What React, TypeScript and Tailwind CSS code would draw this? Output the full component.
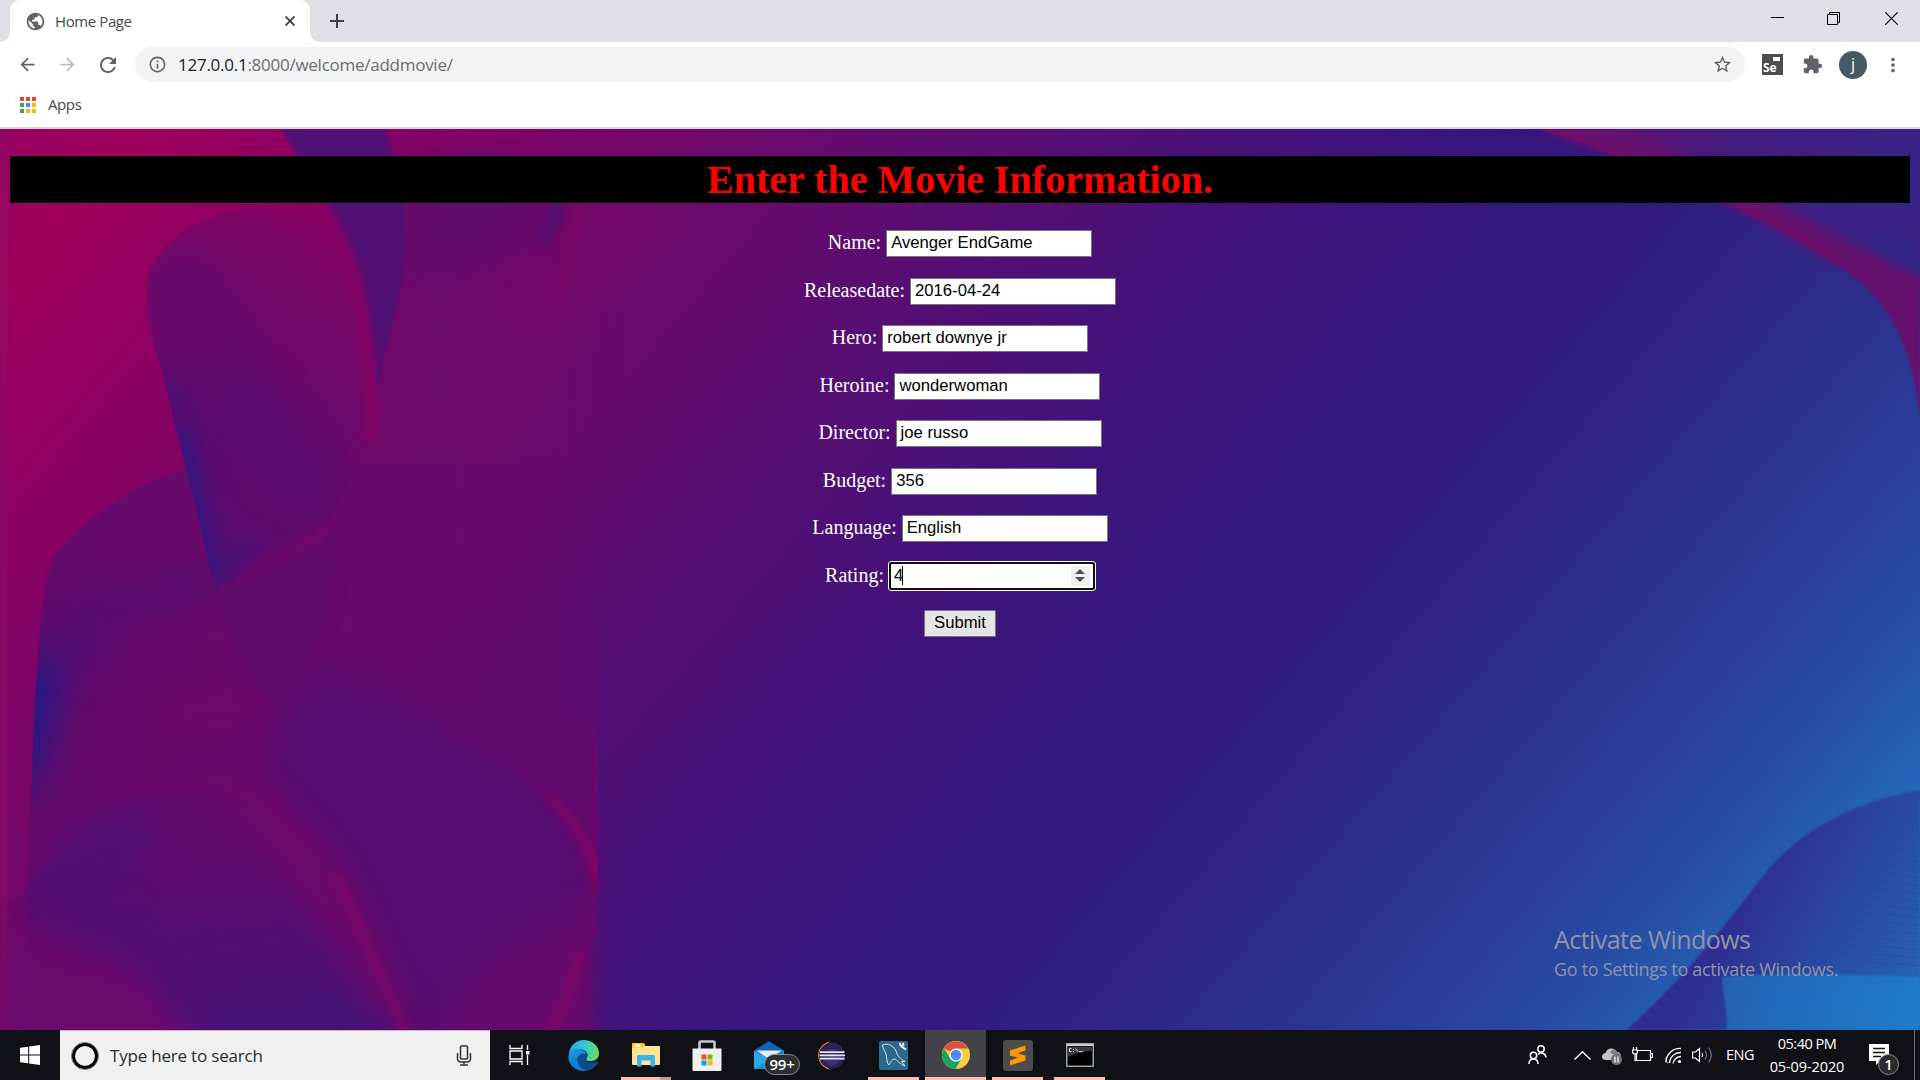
import type { ReactNode } from "react";
import {
  MdArrowBack,
  MdArrowForward,
  MdRefresh,
  MdStarBorder,
  MdExtension,
  MdMoreVert,
  MdPublic,
  MdInfoOutline,
  MdAdd,
} from "react-icons/md";

const appDots = [
  "bg-[#ea4335]", "bg-[#ea4335]", "bg-[#ea4335]",
  "bg-[#34a853]", "bg-[#4285f4]", "bg-[#fbbc04]",
  "bg-[#34a853]", "bg-[#fbbc04]", "bg-[#fbbc04]",
];

function TabStrip() {
  return (
    <div className="flex h-[42px] shrink-0 bg-[#dee1e6]">
      <div className="flex w-[10px] items-end overflow-hidden bg-white">
        <div className="h-full w-full rounded-br-[10px] bg-[#dee1e6]" />
      </div>
      <div className="flex w-[300px] items-center rounded-t-[10px] bg-white pl-[15px] pr-[15px]">
        <MdPublic className="size-[21px] text-[#5f6368]" />
        <span className="ml-[9px] text-[15px] tracking-[-0.4px] text-[#45494d]">Home Page</span>
        <svg className="ml-auto" width="10" height="10" viewBox="0 0 10 10">
          <path d="M.5 .5L9.500 9.500M9.500 .5L.5 9.500" stroke="#3c4043" strokeWidth="1.900" />
        </svg>
      </div>
      <div className="w-[10px] bg-white">
        <div className="h-full w-full rounded-bl-[10px] bg-[#dee1e6]" />
      </div>
      <MdAdd className="ml-[5px] mt-[9px] size-[24px] text-[#3c4043]" />
      <div className="ml-auto flex pt-[12px] text-black">
        <svg width="13" height="13" className="mr-[43px]" viewBox="0 0 13 13">
          <path d="M0 5.5H13" stroke="currentColor" />
        </svg>
        <svg width="13" height="13" className="mr-[45px]" viewBox="0 0 13 13" fill="none" stroke="currentColor">
          <path d="M.5 2.5H10.5V12.5H.5ZM2.5 2.5V.5H12.5V10.5H10.5" />
        </svg>
        <svg width="13" height="13" className="mr-[22px]" viewBox="0 0 13 13" fill="none" stroke="currentColor">
          <path d="M.3 .3L12.7 12.7M12.7 .3L.3 12.7" strokeWidth="1.1" />
        </svg>
      </div>
    </div>
  );
}

function Toolbar() {
  return (
    <div className="flex h-[45px] shrink-0 items-center bg-white pl-[17px] text-[#5f6368]">
      <MdArrowBack className="size-[21px]" />
      <MdArrowForward className="ml-[19px] size-[21px] text-[#babcbe]" />
      <MdRefresh className="ml-[18px] size-[24px]" />
      <div className="ml-[15px] flex h-[35px] w-[1610px] items-center rounded-full bg-[#f1f3f4] pl-[13px] pr-[12px]">
        <MdInfoOutline className="size-[19px]" />
        <span className="ml-[11px] text-[17px] tracking-[-0.26px] text-[#6a6e72]">
          <span className="text-[#202124]">127.0.0.1</span>:8000/welcome/addmovie/
        </span>
        <MdStarBorder className="ml-auto size-[21px]" />
      </div>
      <div className="ml-[17px] flex size-[21px] flex-col items-start bg-[#4d4d4d] pl-[1px] pt-[3px]">
        <span className="mr-[3px] h-[4px] w-[7px] shrink-0 self-end bg-white" />
        <span className="text-[12px] font-bold leading-[13px] tracking-[-0.2px] text-white">Se</span>
      </div>
      <MdExtension className="ml-[19px] size-[21px]" />
      <span className="ml-[16px] flex size-[28px] items-center justify-center rounded-full bg-[#455a64] pb-[2px] text-[16px] text-white">
        j
      </span>
      <MdMoreVert className="ml-[15px] size-[22px]" />
    </div>
  );
}

function BookmarksBar() {
  return (
    <div className="flex h-[42px] shrink-0 items-center border-b-2 border-[#d6d8dc] bg-white pb-[5px] pl-[20px]">
      <div className="grid grid-cols-3 gap-[2px]">
        {appDots.map((c, i) => (
          <span key={i} className={`size-[4px] ${c}`} />
        ))}
      </div>
      <span className="ml-[12px] text-[15px] tracking-[-0.4px] text-[#45494d]">Apps</span>
    </div>
  );
}

function Wallpaper() {
  return (
    <svg className="absolute inset-0" width="1920" height="901" viewBox="0 0 1920 901" aria-hidden="true">
      <defs>
        <linearGradient id="base" gradientUnits="userSpaceOnUse" x1="0" y1="0" x2="1520" y2="1300">
          <stop offset="0" stopColor="#960060" />
          <stop offset=".05" stopColor="#a0005c" />
          <stop offset=".12" stopColor="#900061" />
          <stop offset=".2" stopColor="#7c0567" />
          <stop offset=".28" stopColor="#6e096b" />
          <stop offset=".37" stopColor="#5c0d70" />
          <stop offset=".48" stopColor="#461179" />
          <stop offset=".57" stopColor="#36167e" />
          <stop offset=".66" stopColor="#311b81" />
          <stop offset=".77" stopColor="#2c308d" />
          <stop offset=".87" stopColor="#2848a2" />
          <stop offset=".93" stopColor="#2462b4" />
          <stop offset="1" stopColor="#1f7cc8" />
        </linearGradient>
        <linearGradient id="fold" gradientUnits="userSpaceOnUse" x1="30" y1="0" x2="560" y2="0">
          <stop offset="0" stopColor="#620b6d" />
          <stop offset=".35" stopColor="#6a0a6b" />
          <stop offset=".6" stopColor="#680a6c" />
          <stop offset="1" stopColor="#640b6c" stopOpacity="0" />
        </linearGradient>
        <linearGradient id="lower" gradientUnits="userSpaceOnUse" x1="0" y1="430" x2="0" y2="700">
          <stop offset="0" stopColor="#640b6c" stopOpacity="0" />
          <stop offset="1" stopColor="#640b6c" />
        </linearGradient>
        <linearGradient id="leaf" gradientUnits="userSpaceOnUse" x1="260" y1="80" x2="230" y2="460">
          <stop offset="0" stopColor="#7a0667" />
          <stop offset=".45" stopColor="#6d0a6b" />
          <stop offset=".65" stopColor="#600c6e" />
          <stop offset="1" stopColor="#560e72" />
        </linearGradient>
        <linearGradient id="petal" x1=".3" y1="0" x2=".6" y2="1">
          <stop offset="0" stopColor="#640b6d" />
          <stop offset=".5" stopColor="#5a0d70" />
          <stop offset="1" stopColor="#451278" />
        </linearGradient>
        <linearGradient id="cornerDark" gradientUnits="userSpaceOnUse" x1="1740" y1="770" x2="1900" y2="860">
          <stop offset="0" stopColor="#2f2d8f" />
          <stop offset=".35" stopColor="#2b3f9b" />
          <stop offset="1" stopColor="#2560b2" />
        </linearGradient>
        <linearGradient id="cornerBright" gradientUnits="userSpaceOnUse" x1="1720" y1="850" x2="1920" y2="900">
          <stop offset="0" stopColor="#2562b3" />
          <stop offset="1" stopColor="#1d7dc9" />
        </linearGradient>
        <linearGradient id="topCorner" gradientUnits="userSpaceOnUse" x1="1560" y1="0" x2="1900" y2="100">
          <stop offset="0" stopColor="#650e6d" />
          <stop offset=".5" stopColor="#431b7e" />
          <stop offset="1" stopColor="#352489" />
        </linearGradient>
        <filter id="b1" x="-20%" y="-20%" width="140%" height="140%" colorInterpolationFilters="sRGB"><feGaussianBlur stdDeviation="1.2" /></filter>
        <filter id="b4" filterUnits="userSpaceOnUse" x="-100" y="-100" width="2120" height="1101" colorInterpolationFilters="sRGB"><feGaussianBlur stdDeviation="5" /></filter>
        <filter id="b15" filterUnits="userSpaceOnUse" x="-100" y="-100" width="2120" height="1101" colorInterpolationFilters="sRGB"><feGaussianBlur stdDeviation="16" /></filter>
        <filter id="b40" filterUnits="userSpaceOnUse" x="-200" y="-200" width="2320" height="1301" colorInterpolationFilters="sRGB"><feGaussianBlur stdDeviation="40" /></filter>
        <clipPath id="leafClip">
          <path d="M250 80C200 85 165 110 150 140C144 160 146 195 160 235L216 462C240 445 300 425 329 388L380 300L340 60Z" />
        </clipPath>
        <clipPath id="foldClip">
          <path d="M190 338C130 355 80 395 54 428C42 450 40 500 34 590L24 901H598V300Z" />
        </clipPath>
        <clipPath id="petalClip">
          <path d="M24 770C50 710 90 670 150 668C230 655 290 680 330 740C360 790 380 840 410 901H0V770Z" />
        </clipPath>
        <clipPath id="leftHalf">
          <path d="M0 0H598V901H0Z" />
        </clipPath>
      </defs>
      <rect width="1920" height="901" fill="url(#base)" />
      <path d="M0 0H8V901H0Z" fill="#8c1068" opacity=".5" filter="url(#b1)" />

      <ellipse cx="440" cy="260" rx="90" ry="240" fill="#6c0a6b" filter="url(#b40)" />
      <path d="M282 0H385C412 70 408 130 396 180C384 225 380 240 377 285C370 200 350 130 318 70Z" fill="#511074" filter="url(#b1)" />
      <path d="M258 -5C300 30 335 90 352 140C366 190 372 250 371 310" fill="none" stroke="#900062" strokeWidth="11" filter="url(#b4)" />
      <path d="M405 60C460 40 520 35 556 66C562 110 500 130 410 150Z" fill="#5b0d70" opacity=".7" filter="url(#b15)" />
      <path d="M548 45C562 70 558 95 540 112" fill="none" stroke="#540f72" strokeWidth="14" filter="url(#b4)" />
      <path d="M390 22C450 5 500 5 550 2" fill="none" stroke="#850364" strokeWidth="5" filter="url(#b4)" />
      <path d="M616 -10C585 45 570 100 562 170" fill="none" stroke="#780667" strokeWidth="12" filter="url(#b4)" />

      <path d="M190 338C130 355 80 395 54 428C42 450 40 500 34 590L24 901H598V330Z" fill="url(#fold)" filter="url(#b1)" />
      <g clipPath="url(#leftHalf)">
        <path d="M280 430H600V901H280Z" fill="url(#lower)" />
      </g>
      <g clipPath="url(#foldClip)">
        <path d="M50 500L62 540L48 620L28 680L30 560Z" fill="#1d1a86" filter="url(#b15)" />
        <path d="M38 540L46 560L38 630L28 680Z" fill="#261b84" filter="url(#b4)" />
        <path d="M60 495C100 480 150 475 215 445" fill="none" stroke="#520f73" strokeWidth="34" opacity=".75" filter="url(#b15)" />
        <path d="M60 520L110 530" stroke="#48127a" strokeWidth="40" opacity=".5" filter="url(#b15)" />
        <path d="M120 640C180 560 240 560 290 610" fill="none" stroke="#6e096a" strokeWidth="60" opacity=".6" filter="url(#b15)" />
      </g>

      <g clipPath="url(#leafClip)">
        <path d="M130 120C200 40 350 40 358 300L329 390L216 480L130 240Z" fill="url(#leaf)" filter="url(#b15)" />
        <path d="M150 130C144 160 146 195 160 235L216 462C240 445 300 425 329 388C315 340 290 320 270 250C250 150 200 100 150 130Z" fill="#610c6e" opacity=".7" filter="url(#b15)" />
        <path d="M240 230C290 260 310 320 329 384C300 380 230 340 200 280Z" fill="#580e71" opacity=".7" filter="url(#b15)" />
        <path d="M165 250L212 450L260 425" fill="none" stroke="#3d157b" strokeWidth="26" opacity=".8" filter="url(#b15)" />
        <path d="M184 300L212 440" stroke="#32187f" strokeWidth="9" filter="url(#b4)" />
      </g>
      <path d="M216 465C230 445 300 430 337 400C342 470 330 520 280 575C250 560 230 510 216 465Z" fill="#5f0c6e" opacity=".8" filter="url(#b4)" />
      <path d="M240 445C270 428 310 413 334 394" fill="none" stroke="#740868" strokeWidth="8" filter="url(#b4)" />
      <path d="M337 400C341 470 332 510 285 570" fill="none" stroke="#6f0969" strokeWidth="3" filter="url(#b4)" />

      <path d="M275 600C300 550 320 535 345 545C420 580 480 610 530 645C575 680 590 710 594 760V920H410C380 820 350 740 300 690C270 655 260 630 275 600Z" fill="#570d71" filter="url(#b15)" />
      <path d="M440 600C510 622 570 670 594 740" fill="none" stroke="#6e096a" strokeWidth="9" opacity=".6" filter="url(#b4)" />
      <g clipPath="url(#leftHalf)">
        <path d="M600 620V770C590 715 575 690 550 668" fill="none" stroke="#8a0263" strokeWidth="6" filter="url(#b4)" />
        <path d="M430 920C470 850 520 790 610 780V920Z" fill="#650b6c" filter="url(#b15)" />
        <path d="M582 820C575 850 565 870 550 905" fill="none" stroke="#860364" strokeWidth="8" filter="url(#b4)" />
        <path d="M600 810V910" stroke="#4c1176" strokeWidth="14" filter="url(#b4)" />
      </g>

      <path d="M24 770C50 710 90 670 150 668C230 655 290 680 330 740C360 790 380 840 410 901H24Z" fill="url(#petal)" filter="url(#b4)" />
      <g clipPath="url(#petalClip)">
        <path d="M20 780C50 715 90 685 160 680L130 760Z" fill="#4c1175" opacity=".8" filter="url(#b15)" />
        <path d="M10 800C90 800 160 840 200 930H0Z" fill="#6c0a6b" filter="url(#b15)" />
        <path d="M60 790C160 800 240 830 310 880" fill="none" stroke="#4c1176" strokeWidth="40" opacity=".6" filter="url(#b15)" />
      </g>
      <path d="M200 655C270 650 310 700 345 760C365 810 385 850 408 901L370 880C330 810 290 720 200 655Z" fill="#700969" filter="url(#b15)" />
      <path d="M335 745C358 790 380 850 410 910" fill="none" stroke="#800565" strokeWidth="9" filter="url(#b4)" />

      <path d="M1540 0C1640 35 1760 80 1850 145C1890 175 1912 215 1920 290V0Z" fill="#65126f" filter="url(#b1)" />
      <path d="M1590 -5C1700 15 1790 90 1925 150V-5Z" fill="url(#topCorner)" filter="url(#b4)" />
      <path d="M1545 0C1640 30 1740 72 1840 135" fill="none" stroke="#800764" strokeWidth="6" opacity=".8" filter="url(#b4)" />
      {Array.from({ length: 17 }, (_, i) => (
        <path key={i} d={`M${1800 + i * 8} 0L${1830 + i * 7} ${80 + i * 3}`} stroke="#5a1874" strokeWidth="2" opacity=".3" filter="url(#b1)" />
      ))}

      <path d="M1626 901C1680 855 1730 790 1770 738C1810 695 1860 672 1920 661V901Z" fill="url(#cornerDark)" filter="url(#b1)" />
      {Array.from({ length: 15 }, (_, i) => (
        <path key={i} d={`M${1880 - i * 7} ${722 + i * 8}Q${1900 - i * 3} ${718 + i * 8} 1920 ${725 + i * 8}`} fill="none" stroke="#2d4aa2" strokeWidth="2" opacity=".45" />
      ))}
      <path d="M1727 901C1727 880 1722 860 1722 848C1780 843 1850 846 1920 848V901Z" fill="url(#cornerBright)" filter="url(#b1)" />
    </svg>
  );
}

const fields = [
  { label: "Name:", value: "Avenger EndGame" },
  { label: "Releasedate:", value: "2016-04-24" },
  { label: "Hero:", value: "robert downye jr" },
  { label: "Heroine:", value: "wonderwoman" },
  { label: "Director:", value: "joe russo" },
  { label: "Budget:", value: "356" },
  { label: "Language:", value: "English" },
];

function FieldRow({ label, children }: { label: string; children: ReactNode }) {
  return (
    <div className="flex h-[47.5px] items-start justify-center">
      <span className="mr-[5px] text-[20px] leading-[25px] text-white">{label}</span>
      {children}
    </div>
  );
}

function MoviePage() {
  return (
    <main className="relative h-[901px] overflow-hidden bg-[#31187f] px-[10px] pt-[27px]">
      <Wallpaper />
      <div className="relative">
        <h1 className="h-[47px] bg-black text-center font-['Liberation_Serif',serif] text-[40px] font-bold leading-[47px] text-[#ff0000]">
          Enter the Movie Information.
        </h1>
        <form className="mt-[27px] font-['Liberation_Serif',serif]">
          {fields.map((f) => (
            <FieldRow key={f.label} label={f.label}>
              <span className="h-[27px] w-[206px] border border-[#767676] bg-white pl-[4px] font-['Liberation_Sans',Arial,sans-serif] text-[16.67px] leading-[23px] text-black">
                {f.value}
              </span>
            </FieldRow>
          ))}
          <FieldRow label="Rating:">
            <span className="-mx-px -mt-[2px] flex h-[30px] w-[208px] items-center rounded-[3px] border border-white bg-[#101010] p-[2px]">
              <span className="flex h-full w-full items-center rounded-[1px] bg-white pl-[3px] pr-[3px] font-['Liberation_Sans',Arial,sans-serif] text-[16.67px] leading-[22px] text-black">
                4
                <span className="-ml-px h-[19px] w-px bg-black" />
                <span className="ml-auto flex h-[20px] w-[19px] flex-col items-center justify-center gap-[3px] bg-[#efefef]">
                  <svg width="10" height="5" viewBox="0 0 10 5"><path d="M0 5L5 0L10 5Z" fill="#505050" /></svg>
                  <svg width="10" height="5" viewBox="0 0 10 5"><path d="M0 0L5 5L10 0Z" fill="#505050" /></svg>
                </span>
              </span>
            </span>
          </FieldRow>
          <div className="flex justify-center">
            <button
              type="button"
              className="h-[27px] w-[72px] rounded-[1px] border border-[#767676] bg-[#e5e5e5] pb-[2px] font-['Liberation_Sans',Arial,sans-serif] text-[16.67px] leading-[22px] text-black"
            >
              Submit
            </button>
          </div>
        </form>
      </div>
      <div className="absolute left-[1554px] top-[793px] text-[#8f95a8]">
        <p className="text-[25px] leading-[34px] tracking-[-0.55px]">Activate Windows</p>
        <p className="mt-px text-[18px] leading-[25px] tracking-[-0.31px]">Go to Settings to activate Windows.</p>
      </div>
    </main>
  );
}

function TaskItem({ left, width, line, active, children }: { left: string; width: string; line?: boolean; active?: boolean; children: ReactNode }) {
  return (
    <div className={`relative flex h-[50px] shrink-0 items-center justify-center ${left} ${width} ${active ? "bg-[#434347]" : ""}`}>
      {children}
      {line && <span className="absolute bottom-0 left-0 h-[3px] w-full bg-[#ffbdae]" />}
    </div>
  );
}

function EdgeIcon() {
  return (
    <svg width="31" height="31" viewBox="0 0 32 32">
      <defs>
        <linearGradient id="e1" x1="0" y1=".3" x2="1" y2=".4">
          <stop offset="0" stopColor="#2aa8e8" />
          <stop offset=".5" stopColor="#33c3d8" />
          <stop offset="1" stopColor="#68e05a" />
        </linearGradient>
        <linearGradient id="e2" x1="0" y1="0" x2=".3" y2="1">
          <stop offset="0" stopColor="#1b9de2" />
          <stop offset="1" stopColor="#0b6fd0" />
        </linearGradient>
      </defs>
      <path d="M1 14C2 6 8 0 16 0C25 0 32 6 32 14C32 19 28 22 23 22C19 22 18 20 19.500 18C20.500 16.500 20.500 14.500 19 12.500C15 8 6 8 1 14Z" fill="url(#e1)" />
      <path d="M.5 17C1 11 5 9 10 9C15 9 19 12 19.500 15C14 13 9 17 9 22C9 27 12 31 17 32C8 32.500 0 26 .5 17Z" fill="url(#e2)" />
      <path d="M10 19C12 14 17 13 19.500 15C20.500 17 18.500 18 18.500 20C19 23 24 25 30 22C31 21.500 31.500 22.500 31 23.500C28 29 23 32 17 32C11 30 8 25 10 19Z" fill="#114a8b" />
      <path d="M10 19C9 26 14 31 20 31.500C11 33 4 28 4.500 21Z" fill="#0f7edc" />
    </svg>
  );
}

function FolderIcon() {
  return (
    <svg width="28" height="24" viewBox="0 0 28 24">
      <path d="M0 1Q0 0 1 0H12L13 3H27Q28 3 28 4V21Q28 22 27 22H1Q0 22 0 21Z" fill="#ffe494" />
      <path d="M0 0H12L13 2L11 4.500H0Z" fill="#fcc21b" />
      <path d="M2.500 1.500H8.500V3.500H2.500Z" fill="#fff" />
      <path d="M5 23.500V13.500Q5 12 6.500 12H21.500Q23 12 23 13.500V23.500H18.500V17.500H9.500V23.500Z" fill="#3db4e6" />
    </svg>
  );
}

function StoreIcon() {
  return (
    <svg width="30" height="31" viewBox="0 0 30 31">
      <path d="M7.500 9V3Q7.500 1.500 9 1.500H21Q22.500 1.500 22.500 3V9" fill="none" stroke="#c9c9cb" strokeWidth="2.600" />
      <path d="M.5 8.500H29.500V30Q29.500 31 28.500 31H1.500Q.5 31 .5 30Z" fill="#f0f0f1" />
      <path d="M9.500 14.500H14.500V19.500H9.500Z" fill="#f25022" />
      <path d="M15.500 14.500H20.500V19.500H15.500Z" fill="#7fba00" />
      <path d="M9.500 20.500H14.500V25.500H9.500Z" fill="#00a4ef" />
      <path d="M15.500 20.500H20.500V25.500H15.500Z" fill="#ffb900" />
    </svg>
  );
}

function MailIcon() {
  return (
    <div className="relative h-[28px] w-[30px]">
      <svg width="30" height="28" viewBox="0 0 30 28">
        <path d="M0 9.500L15 0L30 9.500V16H0Z" fill="#0a63b5" />
        <path d="M0 28V9.500L15 18L30 9.500V28Z" fill="#29a9ea" />
        <path d="M2 9.500H28L15 18Z" fill="#ececee" />
        <path d="M0 28L30 9.500V28Z" fill="#1b8fdc" />
      </svg>
      <span className="absolute left-[10px] top-[13px] flex h-[21px] w-[36px] items-center justify-center rounded-full border border-[#8c8c8e] bg-[#2e2f33] text-[15px] font-semibold leading-none tracking-[-0.3px] text-white">
        99+
      </span>
    </div>
  );
}

function EclipseIcon() {
  return (
    <svg width="31" height="29" viewBox="0 0 31 29">
      <path d="M15 .5A14.200 14.200 0 0 0 15 28.500A17 17 0 0 1 15 .5Z" fill="#f79420" />
      <circle cx="17" cy="14.500" r="13" fill="#2c2255" />
      <circle cx="17" cy="16" r="8.500" fill="#3b2f77" />
      <path d="M5 11.200H29.500M4.500 14.400H30M5 17.600H29.500" stroke="#e8e6f2" strokeWidth="1.800" />
    </svg>
  );
}

function DolphinIcon() {
  return (
    <svg width="29" height="29" viewBox="0 0 29 29">
      <rect width="29" height="29" rx="2" fill="#2c678c" />
      <path d="M3.500 4C9 1.500 15 5 17.500 11C18.500 15 21 17.500 26 20.500L22.500 20.500L26 25C20.500 23 18 19 16 18C13.500 18 11.500 20.500 10 24C7.500 22 8 17 7 13C5.500 9 3.500 7 3.500 4Z" fill="none" stroke="#d7e3ea" strokeWidth="1" />
      <path d="M20.500 2L22.500 5.500L27 8.500M24 2L24.500 5" fill="none" stroke="#fff" strokeWidth="1.800" />
    </svg>
  );
}

function ChromeIcon() {
  return (
    <svg width="28" height="28" viewBox="0 0 28 28">
      <circle cx="14" cy="14" r="14" fill="#ffcd40" />
      <path d="M14 14L1.900 7A14 14 0 0 1 26.100 7.500H14Z" fill="#dd4f43" />
      <path d="M1.900 7A14 14 0 0 0 13.500 28L20 17L14 20.500L8 17Z" fill="#1ca261" />
      <circle cx="14" cy="14" r="6.600" fill="#f4f4f4" />
      <circle cx="14" cy="14" r="5.200" fill="#4a8af4" />
    </svg>
  );
}

function SublimeIcon() {
  return (
    <svg width="30" height="31" viewBox="0 0 30 31">
      <rect width="30" height="31" rx="3" fill="#4c4c4b" />
      <path d="M7 10.500L22.500 5.500V10.500L14.500 13.200L22.500 15.500V20.500L7 25.500V20.500L15 17.700L7 15.500Z" fill="#ff9800" />
    </svg>
  );
}

function TerminalIcon() {
  return (
    <svg width="28" height="24" viewBox="0 0 28 24">
      <rect x=".75" y=".75" width="26.500" height="22.500" fill="#000" stroke="#9fa2a6" strokeWidth="1.500" />
      <path d="M1.500 3.500H26.500V8C16 8 6 11 1.500 15Z" fill="#3a3a3a" />
      <path d="M1 1H27V3H1Z" fill="#c9cbce" />
      <path d="M5.500 5.500H3.500V8.500H5.500M7.500 6V6.800M7.500 8V8.800M9.500 5.500L12 8.700M13 8.700H17" fill="none" stroke="#ddd" strokeWidth="1" />
    </svg>
  );
}

function Taskbar() {
  return (
    <footer className="flex h-[50px] shrink-0 items-center bg-[#101116] text-white">
      <div className="flex h-full w-[60px] items-center pl-[20px]">
        <svg width="20" height="20" viewBox="0 0 20 20" fill="#fff">
          <path d="M0 2.800L8.200 1.700V9.500H0ZM9.200 1.500L20 0V9.500H9.200ZM0 10.500H8.200V18.300L0 17.200ZM9.200 10.500H20V20L9.200 18.500Z" />
        </svg>
      </div>
      <div className="flex h-full w-[430px] items-center border-t border-[#b9b9b9] bg-[#f1f1f1] pl-[11px] pr-[18px]">
        <span className="size-[28px] rounded-full border border-[#8a8a8a] bg-black p-[3px]">
          <span className="block size-full rounded-full bg-[#f1f1f1]" />
        </span>
        <span className="ml-[11px] text-[17px] tracking-[-0.2px] text-[#2b2b2b]">Type here to search</span>
        <svg className="ml-auto" width="16" height="21" viewBox="0 0 16 21" fill="none" stroke="#333" strokeWidth="1.500">
          <rect x="4.500" y="1" width="7" height="13" rx="1" />
          <path d="M1.500 8V13Q1.500 17 5 17H11Q14.500 17 14.500 13V8M8 17V20M4 20H12" />
        </svg>
      </div>
      <svg className="ml-[19px]" width="21" height="20" viewBox="0 0 21 20" fill="none" stroke="#fff" strokeWidth="1.300">
        <path d="M1 0V3.500H13V0M1 20V16.500H13V20M1 6H13V14H1ZM18.500 0V5M18.500 10V20" />
        <path d="M17 6H20.500V9.500H17Z" fill="#fff" stroke="none" />
      </svg>
      <TaskItem left="ml-[33px]" width="w-[41px]"><EdgeIcon /></TaskItem>
      <div className="relative ml-[17px] flex h-[50px] w-[50px] items-center justify-center">
        <FolderIcon />
        <span className="absolute bottom-0 left-0 h-[3px] w-[39px] bg-[#ffbdae]" />
        <span className="absolute bottom-0 right-0 h-[3px] w-[11px] bg-[#c89b93]" />
      </div>
      <TaskItem left="ml-[16px]" width="w-[39px]"><StoreIcon /></TaskItem>
      <TaskItem left="ml-[23px]" width="w-[40px]"><MailIcon /></TaskItem>
      <TaskItem left="ml-[21px]" width="w-[40px]"><EclipseIcon /></TaskItem>
      <TaskItem left="ml-[18px]" width="w-[51px]" line><DolphinIcon /></TaskItem>
      <TaskItem left="ml-[6px]" width="w-[61px]" line active><ChromeIcon /></TaskItem>
      <TaskItem left="ml-[6px]" width="w-[51px]" line><SublimeIcon /></TaskItem>
      <TaskItem left="ml-[11px]" width="w-[51px]" line><TerminalIcon /></TaskItem>
      <div className="ml-auto flex h-full items-center">
        <svg width="19" height="20" viewBox="0 0 19 20" fill="none" stroke="#fff" strokeWidth="1.500">
          <circle cx="13" cy="4" r="3.200" />
          <circle cx="5.500" cy="10.500" r="3.200" />
          <path d="M1 19C1 15 3 14 5.500 14C8 14 10 15 10 19M10 9.500C11.500 7.500 17.500 7 18 12.500" />
        </svg>
        <svg className="ml-[27px]" width="17" height="9" viewBox="0 0 17 9" fill="none" stroke="#fff" strokeWidth="1.400">
          <path d="M.5 8.500L8.500 .8L16.500 8.500" />
        </svg>
        <svg className="ml-[11px] mt-[3px]" width="21" height="17" viewBox="0 0 21 17">
          <path d="M4 12Q0 12 0 8.500Q0 5.500 3.500 5Q5 0 10 .5Q14 1 15 4Q19 4 19 9V12Z" fill="#c4c4c4" />
          <path d="M8 4Q12 -1 15 4Q19 5 19 9L10 6Z" fill="#818181" />
          <circle cx="14.500" cy="11.500" r="5.500" fill="#747474" />
          <path d="M13 8.500V14.500M16 8.500V14.500" stroke="#fff" strokeWidth="1.200" />
        </svg>
        <svg className="ml-[9px]" width="21" height="16" viewBox="0 0 21 16" fill="none" stroke="#fff" strokeWidth="1.200">
          <path d="M6 3.500H18.500V13.500H4.500V7M18.500 6.500H20.500V10.500H18.500M1.500 0V3M4.500 0V3M.6 3H5.400V5Q5.400 7 3 7Q.6 7 .6 5ZM3 7V13.500H5" />
        </svg>
        <svg className="ml-[12px]" width="17" height="17" viewBox="0 0 17 17" fill="none" stroke="#fff" strokeWidth="1.300">
          <path d="M1 15A14 14 0 0 1 16 1.500M4.500 16A11 11 0 0 1 16 5.500M8 16.500A8 8 0 0 1 16 9.500" />
          <path d="M1 10V15L4 16" opacity=".5" />
          <circle cx="14.500" cy="14.500" r="1.600" fill="#fff" stroke="none" />
        </svg>
        <svg className="ml-[10px]" width="21" height="18" viewBox="0 0 21 18" fill="none" stroke="#fff" strokeWidth="1.200">
          <path d="M.6 6H3.500L7.500 2.500V15.500L3.500 12H.6Z" />
          <path d="M10 7Q11.500 9 10 11" />
          <path d="M13 4.500Q16 9 13 13.500M16.500 1.500Q22 9 16.500 16.500" stroke="#77787b" />
        </svg>
        <span className="ml-[13px] w-[29px] text-[14.500px] tracking-[-0.5px]">ENG</span>
        <div className="ml-[12px] flex w-[80px] flex-col items-center whitespace-nowrap text-[14.500px] leading-[23px]">
          <span className="tracking-[-0.5px]">05:40 PM</span>
          <span className="tracking-[-0.1px]">05-09-2020</span>
        </div>
        <div className="relative ml-[22px] mr-[24px] h-[26px] w-[21px]">
          <svg className="mt-[2px]" width="20" height="22" viewBox="0 0 20 22">
            <path d="M0 0H20V17H11L7 21V17H0Z" fill="#fff" />
            <path d="M4 4.500H16M4 8.500H16M4 12.500H12" stroke="#111" strokeWidth="1.300" />
          </svg>
          <span className="absolute left-[9px] top-[12px] flex size-[21px] items-center justify-center rounded-full border border-[#8b8b8d] bg-[#2b2c30] text-[15px] font-semibold leading-none">
            1
          </span>
        </div>
        <span className="mr-[5px] h-full w-px bg-[#6b6c70]" />
      </div>
    </footer>
  );
}

export default function App() {
  return (
    <div className="flex h-[1080px] w-[1920px] flex-col overflow-hidden font-['Open_Sans','Noto_Sans',sans-serif]">
      <TabStrip />
      <Toolbar />
      <BookmarksBar />
      <MoviePage />
      <Taskbar />
    </div>
  );
}
